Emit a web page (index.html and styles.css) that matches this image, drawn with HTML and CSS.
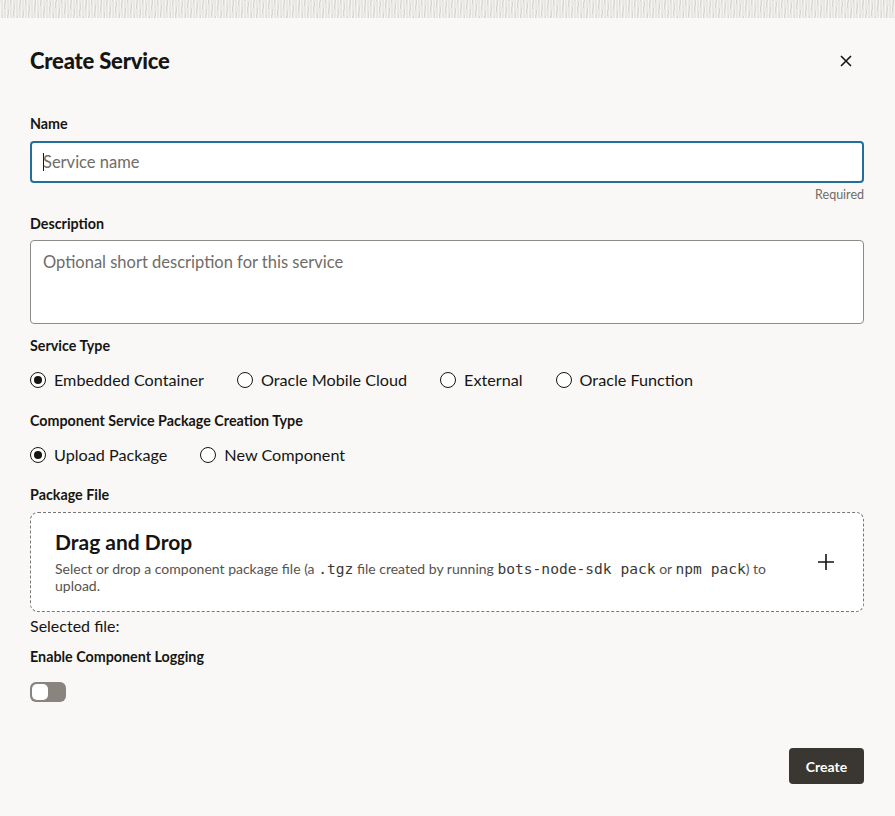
FILE: index.html
```html
<!DOCTYPE html>
<html>
<head>
<meta charset="utf-8">
<link rel="stylesheet" href="styles.css">
</head>
<body>
<div class="backdrop"></div>
<div class="dialog">
  <div class="header">
    <h1 class="title">Create Service</h1>
    <button class="close" aria-label="Close">
      <svg width="12" height="12" viewBox="0 0 12 12"><path d="M1 1L11 11M11 1L1 11" stroke="#161513" stroke-width="1.6" fill="none"/></svg>
    </button>
  </div>

  <div class="label">Name</div>
  <div class="input focused"><span class="caret"></span><span class="ph">Service name</span></div>
  <div class="help">Required</div>

  <div class="label l-desc">Description</div>
  <div class="textarea"><span class="ph">Optional short description for this service</span></div>

  <div class="label l-type">Service Type</div>
  <div class="radios">
    <label class="radio checked"><span class="dot"></span>Embedded Container</label>
    <label class="radio"><span class="dot"></span>Oracle Mobile Cloud</label>
    <label class="radio"><span class="dot"></span>External</label>
    <label class="radio"><span class="dot"></span>Oracle Function</label>
  </div>

  <div class="label l-comp">Component Service Package Creation Type</div>
  <div class="radios">
    <label class="radio checked"><span class="dot"></span>Upload Package</label>
    <label class="radio"><span class="dot"></span>New Component</label>
  </div>

  <div class="label l-pkg">Package File</div>
  <div class="dropzone">
    <div class="dz-text">
      <div class="dz-title">Drag and Drop</div>
      <div class="dz-desc">Select or drop a component package file (a <code>.tgz</code> file created by running <code>bots-node-sdk pack</code> or <code>npm pack</code>) to upload.</div>
    </div>
    <svg class="plus" width="18" height="18" viewBox="0 0 18 18"><path d="M9 1V17M1 9H17" stroke="#161513" stroke-width="1.6" fill="none"/></svg>
  </div>
  <div class="selected">Selected file:</div>

  <div class="label l-log">Enable Component Logging</div>
  <div class="toggle"><span class="knob"></span></div>

  <div class="footer">
    <button class="create">Create</button>
  </div>
</div>
</body>
</html>
```

FILE: styles.css
```css
* { box-sizing: border-box; }
html, body { margin: 0; padding: 0; }
body {
  background: #f9f8f6;
  font-family: "Lato", "Noto Sans", sans-serif;
  color: #161513;
  width: 895px;
  height: 816px;
  overflow: hidden;
}
.backdrop {
  height: 18px;
  background-color: #e9e7e4;
  background-image:
    repeating-linear-gradient(90deg, rgba(255,255,255,0.55) 0 1px, transparent 1px 3px),
    repeating-linear-gradient(100deg, rgba(200,197,193,0.5) 0 1px, transparent 1px 5px);
}
.dialog {
  padding: 0 31px 0 30px;
}
.header {
  display: flex;
  align-items: center;
  justify-content: space-between;
  padding-top: 29px;
  margin-bottom: 40px;
}
.title {
  margin: 0;
  font-size: 22px;
  font-weight: 900;
  line-height: 28px;
  letter-spacing: -0.2px;
}
.close {
  border: 0;
  background: none;
  padding: 0;
  margin-right: 12px;
  width: 12px;
  height: 12px;
  display: flex;
}
.label {
  font-size: 14.3px;
  font-weight: 700;
  line-height: 18px;
  height: 18px;
}
.input {
  margin-top: 8px;
  height: 42px;
  background: #fff;
  border: 2px solid #22709a;
  border-radius: 4px;
  display: flex;
  align-items: center;
  padding-left: 11px;
}
.caret {
  width: 1px;
  height: 18px;
  background: #161513;
  margin-right: -1px;
}
.ph {
  color: #6f6c69;
  font-size: 16.5px;
}
.help {
  margin-top: 4px;
  height: 16px;
  line-height: 16px;
  font-size: 12.5px;
  color: #6f6c69;
  text-align: right;
}
.l-desc { margin-top: 12px; }
.textarea {
  margin-top: 7px;
  height: 84px;
  background: #fff;
  border: 1px solid #8f8c88;
  border-radius: 4px;
  padding: 10px 12px;
  line-height: 22px;
}
.l-type { margin-top: 13px; }
.radios {
  margin-top: 13px;
  display: flex;
  gap: 33px;
  height: 24px;
  align-items: center;
}
.radio {
  display: flex;
  align-items: center;
  font-size: 16.2px;
  line-height: 24px;
}
.dot {
  width: 16px;
  height: 16px;
  border: 1.3px solid #161513;
  border-radius: 50%;
  margin-right: 8px;
  display: flex;
  align-items: center;
  justify-content: center;
  background: #fff;
}
.radio.checked .dot::after {
  content: "";
  width: 8px;
  height: 8px;
  border-radius: 50%;
  background: #161513;
}
.l-comp { margin-top: 20px; }
.l-pkg { margin-top: 19px; }
.dropzone {
  margin-top: 8px;
  height: 100px;
  background: #fff;
  border: 1px dashed #7a7773;
  border-radius: 8px;
  display: flex;
  align-items: flex-start;
  padding: 16px 28px 0 24px;
}
.dz-text { flex: 1; padding-right: 34px; }
.dz-title {
  font-size: 21px;
  font-weight: 700;
  line-height: 26px;
}
.dz-desc {
  margin-top: 5px;
  font-size: 14px;
  line-height: 17px;
  color: #56524e;
}
.dz-desc code {
  font-family: "DejaVu Sans Mono", monospace;
  font-size: 14.6px;
  line-height: 14px;
  color: #3b3835;
}
.plus { margin-top: 24px; }
.selected {
  margin-top: 4px;
  font-size: 16px;
  line-height: 20px;
}
.l-log { margin-top: 12px; }
.toggle {
  margin-top: 16px;
  width: 36px;
  height: 20px;
  border-radius: 6px;
  background: #8a847e;
  padding: 2px;
}
.knob {
  display: block;
  width: 16px;
  height: 16px;
  border-radius: 5px;
  background: #fff;
}
.footer {
  display: flex;
  justify-content: flex-end;
  margin-top: 46px;
}
.create {
  height: 36px;
  width: 75px;
  border: 0;
  border-radius: 4px;
  background: #3a3631;
  color: #fff;
  font-family: "Lato", "Noto Sans", sans-serif;
  font-size: 14px;
  font-weight: 700;
}
```
